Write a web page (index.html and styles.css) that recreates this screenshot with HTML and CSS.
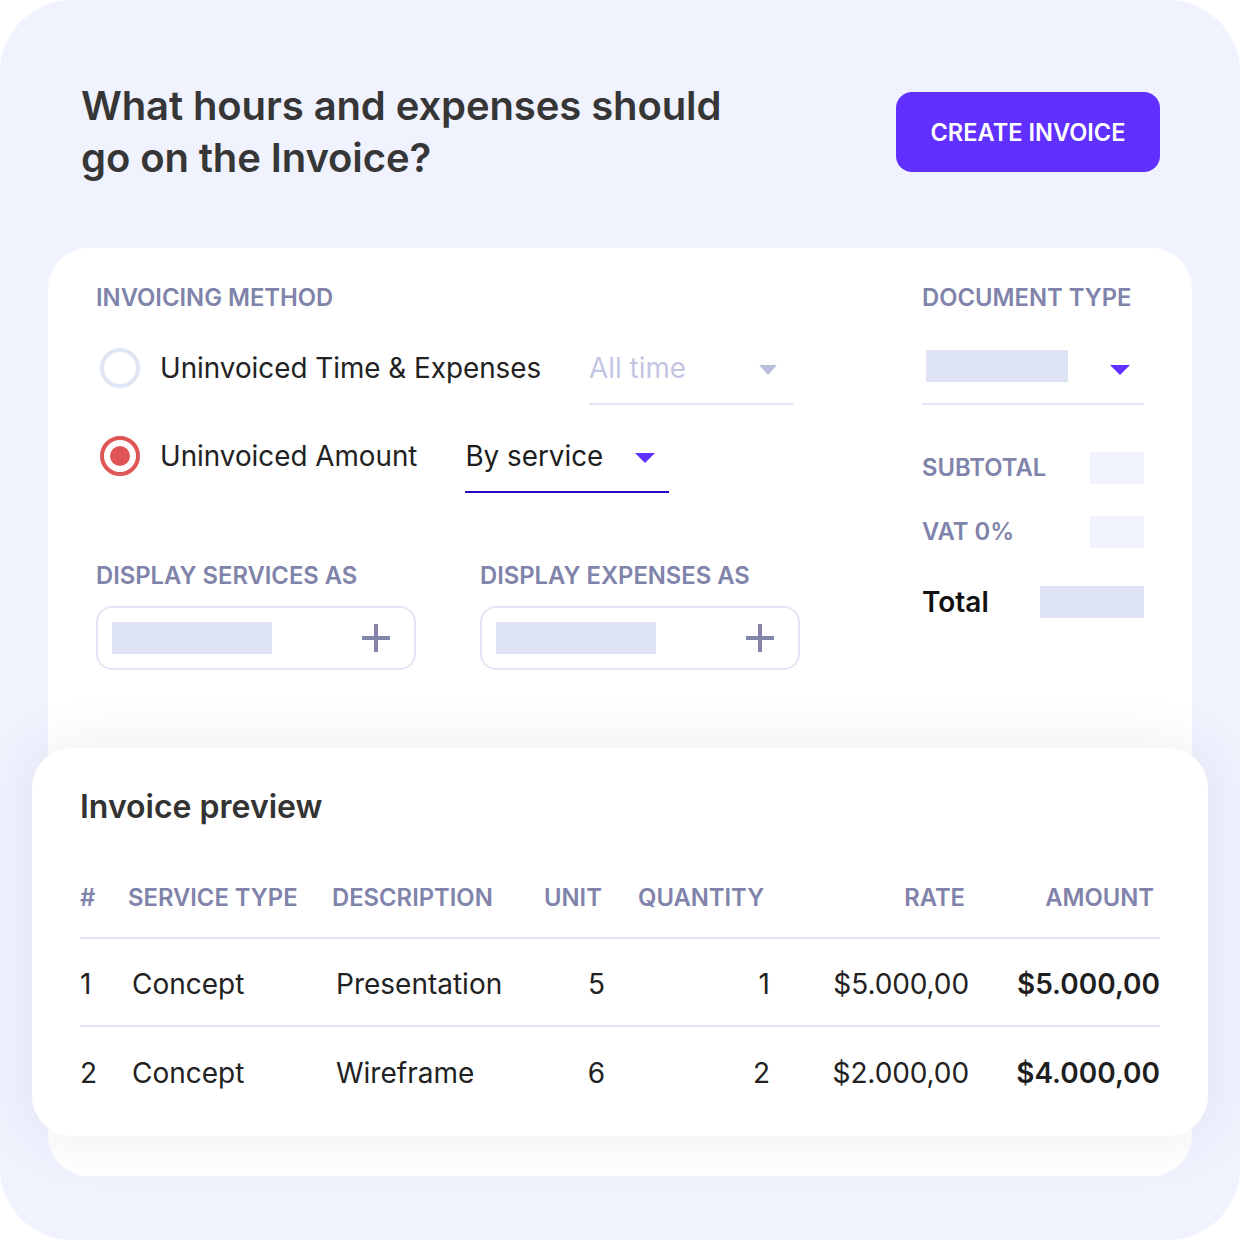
FILE: index.html
```html
<!DOCTYPE html>
<html lang="en">
<head>
<meta charset="utf-8">
<title>Invoice</title>
<link rel="stylesheet" href="styles.css">
</head>
<body>
<div class="frame">
  <header class="top">
    <h1 class="title">What hours and expenses should<br>go on the Invoice?</h1>
    <button class="btn-primary">CREATE INVOICE</button>
  </header>

  <section class="card">
    <div class="settings">
      <div class="left">
        <div class="label">INVOICING METHOD</div>
        <div class="radio-row row-1">
          <span class="radio"></span>
          <span class="radio-text">Uninvoiced Time &amp; Expenses</span>
          <div class="select select-muted">
            <span class="select-value">All time</span>
            <span class="caret caret-muted"></span>
          </div>
        </div>
        <div class="radio-row row-2">
          <span class="radio radio-on"></span>
          <span class="radio-text">Uninvoiced Amount</span>
          <div class="select select-active">
            <span class="select-value">By service</span>
            <span class="caret"></span>
          </div>
        </div>
        <div class="display-grid">
          <div class="display-col">
            <div class="label">DISPLAY SERVICES AS</div>
            <div class="chip-box">
              <span class="ph ph-chip"></span>
              <span class="plus"></span>
            </div>
          </div>
          <div class="display-col">
            <div class="label">DISPLAY EXPENSES AS</div>
            <div class="chip-box">
              <span class="ph ph-chip"></span>
              <span class="plus"></span>
            </div>
          </div>
        </div>
      </div>
      <div class="right">
        <div class="label">DOCUMENT TYPE</div>
        <div class="select doc-select">
          <span class="ph ph-doc"></span>
          <span class="caret"></span>
        </div>
        <div class="sum-row sum-sub">
          <span class="label">SUBTOTAL</span>
          <span class="ph ph-light"></span>
        </div>
        <div class="sum-row sum-vat">
          <span class="label">VAT 0%</span>
          <span class="ph ph-light"></span>
        </div>
        <div class="sum-row sum-total">
          <span class="total-label">Total</span>
          <span class="ph ph-total"></span>
        </div>
      </div>
    </div>

    <div class="preview">
      <h2 class="preview-title">Invoice preview</h2>
      <table class="table">
        <thead>
          <tr>
            <th class="c-num">#</th>
            <th class="c-type">SERVICE TYPE</th>
            <th class="c-desc">DESCRIPTION</th>
            <th class="c-unit">UNIT</th>
            <th class="c-qty">QUANTITY</th>
            <th class="c-rate">RATE</th>
            <th class="c-amt">AMOUNT</th>
          </tr>
        </thead>
        <tbody>
          <tr class="row-first">
            <td class="c-num">1</td>
            <td class="c-type">Concept</td>
            <td class="c-desc">Presentation</td>
            <td class="c-unit">5</td>
            <td class="c-qty">1</td>
            <td class="c-rate">$5.000,00</td>
            <td class="c-amt">$5.000,00</td>
          </tr>
          <tr>
            <td class="c-num">2</td>
            <td class="c-type">Concept</td>
            <td class="c-desc">Wireframe</td>
            <td class="c-unit">6</td>
            <td class="c-qty">2</td>
            <td class="c-rate">$2.000,00</td>
            <td class="c-amt">$4.000,00</td>
          </tr>
        </tbody>
      </table>
    </div>
  </section>
</div>
</body>
</html>
```

FILE: styles.css
```css
* { box-sizing: border-box; }

html, body {
  margin: 0;
  padding: 0;
  background: #ffffff;
}

body {
  font-family: Inter, "Noto Sans", "Liberation Sans", sans-serif;
  color: #222222;
}

.frame {
  width: 1240px;
  height: 1240px;
  background: #f0f2fe;
  border-radius: 72px;
  padding: 80px 48px 0 48px;
  overflow: hidden;
}

.top {
  display: flex;
  justify-content: space-between;
  align-items: flex-start;
  padding: 0 32px 0 33px;
  height: 168px;
}

.title {
  margin: 0;
  font-size: 40px;
  line-height: 52px;
  font-weight: 600;
  color: #363636;
  letter-spacing: -0.1px;
}

.btn-primary {
  margin-top: 12px;
  width: 264px;
  height: 80px;
  border: none;
  border-radius: 16px;
  background: #6030ff;
  color: #ffffff;
  font-family: Inter, "Noto Sans", sans-serif;
  font-size: 23.6px;
  font-weight: 600;
  padding: 0;
}

.card {
  background: #ffffff;
  border-radius: 40px;
  padding: 0 0 40px 0;
}

.settings {
  display: flex;
  justify-content: space-between;
  padding: 38px 48px 0 48px;
  height: 500px;
}

.label {
  font-size: 23.8px;
  line-height: 24px;
  font-weight: 600;
  color: #8083aa;
}

.left { width: 720px; }

.radio-row {
  display: flex;
  align-items: flex-start;
  height: 40px;
}
.row-1 { margin-top: 38px; }
.row-2 { margin-top: 48px; }

.radio {
  width: 40px;
  height: 40px;
  border-radius: 50%;
  border: 4px solid #e1e5f6;
  margin-left: 4px;
  flex: none;
  display: flex;
  align-items: center;
  justify-content: center;
}
.radio-on { border-color: #e05555; }
.radio-on::after {
  content: "";
  width: 20px;
  height: 20px;
  border-radius: 50%;
  background: #e05555;
}

.radio-text {
  margin-left: 20px;
  font-size: 27.8px;
  line-height: 40px;
  color: #222222;
  white-space: nowrap;
}

.select {
  display: flex;
  align-items: flex-start;
  justify-content: space-between;
  flex: none;
  width: 204px;
  height: 57px;
  border-bottom: 2px solid #e1e5f4;
}
.select-muted {
  margin-left: 48px;
  padding-right: 16px;
}
.select-active {
  margin-left: 48px;
  padding-right: 14px;
  border-bottom-color: #2c06c8;
}
.select-value {
  font-size: 27.8px;
  line-height: 40px;
  color: #1d1d1d;
}
.select-muted .select-value { color: #c3c6e2; }

.caret {
  margin-top: 17px;
  width: 0;
  height: 0;
  border-left: 10px solid transparent;
  border-right: 10px solid transparent;
  border-top: 10px solid #6030ff;
}
.caret-muted {
  border-left-width: 9px;
  border-right-width: 9px;
  border-top-color: #babdde;
}

.display-grid {
  display: flex;
  gap: 64px;
  margin-top: 88px;
}
.display-col { width: 320px; }

.chip-box {
  margin-top: 18px;
  height: 64px;
  border: 2px solid #e1e5f6;
  border-radius: 16px;
  display: flex;
  align-items: center;
  justify-content: space-between;
  padding: 0 24px 0 14px;
}

.ph {
  display: block;
  background: #dfe4f5;
}
.ph-chip { width: 160px; height: 32px; }

.plus {
  position: relative;
  width: 28px;
  height: 28px;
}
.plus::before, .plus::after {
  content: "";
  position: absolute;
  background: #8385aa;
}
.plus::before { left: 0; top: 12px; width: 28px; height: 4px; }
.plus::after { left: 12px; top: 0; width: 4px; height: 28px; }

.right { width: 222px; }

.doc-select {
  margin-top: 40px;
  width: 222px;
  height: 55px;
  padding: 0 14px 0 4px;
}
.ph-doc { width: 142px; height: 32px; }
.doc-select .caret { margin-top: 15px; }

.sum-row {
  display: flex;
  align-items: center;
  justify-content: space-between;
  height: 32px;
}
.sum-sub { margin-top: 47px; }
.sum-vat { margin-top: 32px; }
.sum-total { margin-top: 38px; }

.ph-light { width: 54px; height: 32px; background: #f0f3fe; }
.ph-total { width: 104px; height: 32px; }

.total-label {
  font-size: 28px;
  font-weight: 600;
  color: #111111;
}

.preview {
  margin: 0 -16px;
  background: #ffffff;
  border-radius: 40px;
  padding: 39px 48px 22px 48px;
  box-shadow: 0 0 60px rgba(40, 44, 110, 0.09);
  position: relative;
}

.preview-title {
  margin: 0;
  font-size: 32px;
  line-height: 40px;
  font-weight: 600;
  color: #333333;
}

.table {
  margin-top: 57px;
  width: 100%;
  border-collapse: collapse;
  table-layout: fixed;
}

.table th {
  font-size: 23.8px;
  line-height: 24px;
  font-weight: 600;
  color: #8083aa;
  text-align: left;
  padding: 2px 0 27px 0;
  vertical-align: middle;
  border-bottom: 2px solid #e1e5f4;
  white-space: nowrap;
}

.table td {
  font-size: 28px;
  line-height: 40px;
  color: #222222;
  height: 88px;
  padding: 4px 0 0 0;
  white-space: nowrap;
  vertical-align: middle;
}
.table .row-first td { border-bottom: 2px solid #e1e5f4; }

.c-num { width: 48px; }
.c-type { width: 204px; }
.c-desc { width: 212px; }
.c-unit { width: 61px; }
.c-qty { width: 165px; }
.c-rate { width: 199px; }

.table td.c-type, .table td.c-desc { padding-left: 4px; }
.table th.c-unit { text-align: right; padding-right: 4px; }
.table td.c-unit, .table td.c-qty, .table td.c-rate, .table td.c-amt { text-align: right; }
.table th.c-qty { text-align: left; padding-left: 33px; }
.table th.c-rate { text-align: right; padding-right: 4px; }
.table td.c-rate { padding-right: 0; letter-spacing: -0.1px; }
.table th.c-amt { text-align: right; padding-right: 6px; }
.table td.c-amt { font-weight: 600; color: #1f1f1f; }
```
